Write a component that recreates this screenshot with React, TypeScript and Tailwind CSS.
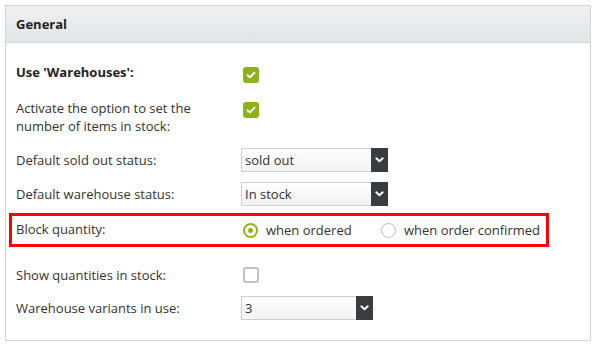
import React from 'react';

const font = { fontFamily: '"Open Sans", "Liberation Sans", sans-serif' };

function Check({ checked }: { checked: boolean }) {
  if (!checked) {
    return <span className="block w-4 h-4 rounded-[3px] border-2 border-[#c2c2c2] bg-white" />;
  }
  return (
    <span className="flex w-4 h-4 rounded-[3px] bg-[#8db31c] items-center justify-center">
      <svg width="10" height="8" viewBox="0 0 10 8" fill="none">
        <path d="M1.5 4.2 L3.9 6.4 L8.5 1.6" stroke="white" strokeWidth="1.9" strokeLinecap="round" strokeLinejoin="round" />
      </svg>
    </span>
  );
}

function Radio({ checked, label, className }: { checked: boolean; label: string; className?: string }) {
  return (
    <div className={'flex items-center ' + (className ?? '')}>
      {checked ? (
        <span className="flex w-[15px] h-[15px] rounded-full border-[2.5px] border-[#8db31c] items-center justify-center">
          <span className="block w-[5px] h-[5px] rounded-full bg-[#8db31c]" />
        </span>
      ) : (
        <span className="block w-[15px] h-[15px] rounded-full border-[1.5px] border-[#bdbdbd]" />
      )}
      <span className="ml-[8px]">{label}</span>
    </div>
  );
}

function Select({ value, width }: { value: string; width: string }) {
  return (
    <div className={'flex h-6 ' + width}>
      <div className="flex-1 flex items-center pl-[3px] border border-r-0 border-[#cfcfcf] bg-gradient-to-b from-white to-[#f2f2f2]">
        {value}
      </div>
      <div className="w-[17px] bg-[#3a3d40] flex items-center justify-center">
        <svg width="9" height="6" viewBox="0 0 9 6" fill="none">
          <path d="M1.3 1.3 L4.5 4.3 L7.7 1.3" stroke="white" strokeWidth="1.9" strokeLinecap="round" strokeLinejoin="round" />
        </svg>
      </div>
    </div>
  );
}

export default function App() {
  return (
    <div className="w-[597px] h-[347px] bg-white pl-[5px] pt-[5px] text-[13px] leading-[18px] text-[#333]" style={font}>
      <div className="w-[586px] h-[336px] border border-[#d4d4d4]">
        <div className="h-[37px] border-b border-[#d2d4d6] bg-gradient-to-b from-[#eef0f1] to-[#e2e5e7] flex items-center pl-[10px] font-bold text-[#222]">
          General
        </div>

        <div className="px-[10px] pt-[20px]">
          <div className="flex h-[20px]">
            <div className="w-[225px] font-bold text-[#222]">Use 'Warehouses':</div>
            <div className="ml-[2px] mt-[4px]"><Check checked /></div>
          </div>

          <div className="flex h-[36px] mt-[16px]">
            <div className="w-[225px]">
              Activate the option to set the
              <br />
              number of items in stock:
            </div>
            <div className="ml-[2px] mt-[3px]"><Check checked /></div>
          </div>

          <div className="flex items-center h-6 mt-[13px]">
            <div className="w-[225px]">Default sold out status:</div>
            <Select value="sold out" width="w-[147px]" />
          </div>

          <div className="flex items-center h-6 mt-[10px]">
            <div className="w-[225px]">Default warehouse status:</div>
            <Select value="In stock" width="w-[147px]" />
          </div>

          <div className="flex items-center h-[34px] mt-[7px] -ml-[7px] w-[540px] border-[3px] border-[#ff0000] pl-[4px]">
            <div className="w-[225px] -mt-[3px]">Block quantity:</div>
            <Radio checked label="when ordered" className="ml-[2px] w-[138px]" />
            <Radio checked={false} label="when order confirmed" />
          </div>

          <div className="flex items-center h-4 mt-[20px]">
            <div className="w-[225px]">Show quantities in stock:</div>
            <div className="ml-[2px]"><Check checked={false} /></div>
          </div>

          <div className="flex items-center h-6 mt-[13px]">
            <div className="w-[225px]">Warehouse variants in use:</div>
            <Select value="3" width="w-[132px]" />
          </div>
        </div>
      </div>
    </div>
  );
}
